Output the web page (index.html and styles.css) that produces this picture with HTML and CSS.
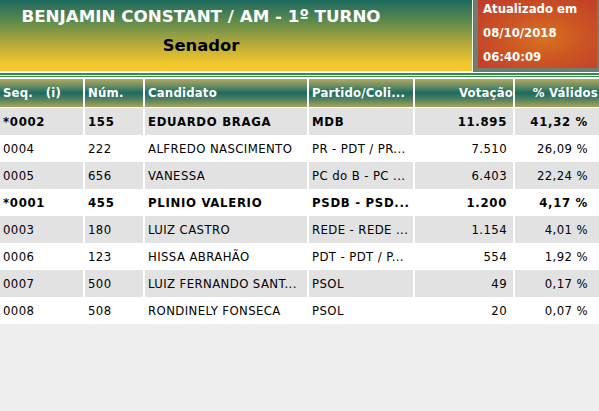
FILE: index.html
```html
<!DOCTYPE html>
<html lang="pt">
<head>
<meta charset="utf-8">
<title>Benjamin Constant - Senador</title>
<link rel="stylesheet" href="styles.css">
</head>
<body>
<div class="top">
  <div class="title-box">
    <div class="title">BENJAMIN CONSTANT / AM - 1º TURNO</div>
    <div class="subtitle">Senador</div>
  </div>
  <div class="update-wrap">
    <div class="update">
      <div class="update-lines">
        <div>Atualizado em</div>
        <div>08/10/2018</div>
        <div>06:40:09</div>
      </div>
    </div>
  </div>
</div>
<div class="stripes"></div>
<div class="results">
  <div class="row head">
    <div>Seq.&nbsp;&nbsp; (i)</div><div>Núm.</div><div>Candidato</div><div>Partido/Coli...</div><div class="r">Votação</div><div class="r">% Válidos</div>
  </div>
  <div class="row odd b"><div>*0002</div><div>155</div><div>EDUARDO BRAGA</div><div>MDB</div><div class="r">11.895</div><div class="r pct">41,32 %</div></div>
  <div class="row"><div>0004</div><div>222</div><div>ALFREDO NASCIMENTO</div><div>PR - PDT / PR...</div><div class="r">7.510</div><div class="r pct">26,09 %</div></div>
  <div class="row odd"><div>0005</div><div>656</div><div>VANESSA</div><div>PC do B - PC ...</div><div class="r">6.403</div><div class="r pct">22,24 %</div></div>
  <div class="row b"><div>*0001</div><div>455</div><div>PLINIO VALERIO</div><div>PSDB - PSD...</div><div class="r">1.200</div><div class="r pct">4,17 %</div></div>
  <div class="row odd"><div>0003</div><div>180</div><div>LUIZ CASTRO</div><div>REDE - REDE ...</div><div class="r">1.154</div><div class="r pct">4,01 %</div></div>
  <div class="row"><div>0006</div><div>123</div><div>HISSA ABRAHÃO</div><div>PDT - PDT / P...</div><div class="r">554</div><div class="r pct">1,92 %</div></div>
  <div class="row odd"><div>0007</div><div>500</div><div>LUIZ FERNANDO SANT...</div><div>PSOL</div><div class="r">49</div><div class="r pct">0,17 %</div></div>
  <div class="row"><div>0008</div><div>508</div><div>RONDINELY FONSECA</div><div>PSOL</div><div class="r">20</div><div class="r pct">0,07 %</div></div>
</div>
</body>
</html>
```
FILE: styles.css
```css
html, body {
  margin: 0;
  padding: 0;
}
body {
  background: #eeeeee;
  font-family: "DejaVu Sans Condensed", "DejaVu Sans", sans-serif;
  color: #000;
  width: 599px;
  height: 411px;
  overflow: hidden;
}
.top {
  display: flex;
  height: 72px;
  background: #6f7c72;
}
.title-box {
  box-sizing: border-box;
  width: 473px;
  height: 72px;
  border-right: 1px solid #f4f4e8;
  border-bottom: 1px solid #f4f4e8;
  box-shadow: 1px 0 0 #2f9a48;
  background: linear-gradient(#1c6a5f 0%, #5f8a4c 30%, #b5ab3c 62%, #eec52d 88%, #f3c82c 100%);
  padding-right: 70px;
  text-align: center;
  font-family: "DejaVu Sans", sans-serif;
}
.title {
  color: #fff;
  font-weight: bold;
  font-size: 16.7px;
  padding-top: 6px;
  line-height: 20px;
}
.subtitle {
  color: #000;
  font-weight: bold;
  font-size: 16.4px;
  line-height: 20px;
  margin-top: 10px;
}
.update-wrap {
  flex: 1;
  padding: 0 2px 4px 5px;
}
.update {
  height: 68px;
  background: radial-gradient(ellipse at 55% 55%, #d8721e 0%, #cc5424 45%, #bf3a2a 100%);
  color: #fff;
  font-weight: bold;
  font-size: 13px;
  line-height: 24px;
  padding-left: 5px;
  overflow: hidden;
}
.update-lines {
  margin-top: -3px;
}
.stripes {
  height: 7px;
  background: linear-gradient(#ffffff 0 1px, #2e8f45 1px 3px, #ffffff 3px 4px, #2e8f45 4px 5px, #ffffff 5px 7px);
}
.results {
  font-size: 13px;
  letter-spacing: 0.4px;
}
.row {
  display: grid;
  grid-template-columns: 83px 58px 162px 104px 98px 84px;
  column-gap: 2px;
  height: 27px;
  align-items: center;
  background-color: #fff;
}
.row > div {
  padding: 0 6px 0 3px;
  white-space: nowrap;
  overflow: hidden;
  height: 27px;
  line-height: 27px;
  background: #fff;
}
.row.odd > div {
  background: #e2e2e2;
}
.row.b > div {
  font-weight: bold;
  letter-spacing: 0.7px;
}
.row.head {
  height: 28px;
  border-bottom: 1px solid #fff;
}
.row.head > div {
  height: 28px;
  line-height: 28px;
  color: #fff;
  font-weight: bold;
  letter-spacing: 0.2px;
  padding-right: 0;
  background: linear-gradient(#b2a85c 0%, #5f8a64 28%, #1d6a5f 50%, #4f8060 72%, #a9a456 100%);
}
.row > .r {
  text-align: right;
}
.row > .pct {
  padding-right: 11px;
}
.row.head > .r:last-child {
  padding-right: 1px;
}
```
